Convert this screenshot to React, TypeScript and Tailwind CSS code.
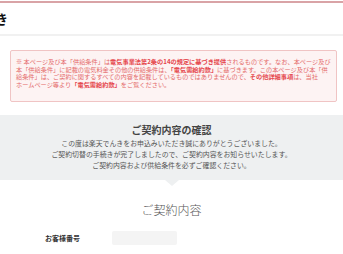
import React from 'react';

const noticeLines: { text: string; strong?: boolean }[][] = [
    [
        { text: '※ 本ページ及び本「供給条件」は' },
        { text: '電気事業法第2条の14の規定に基づき提供', strong: true },
        { text: 'されるものです。なお、本ページ及び' },
    ],
    [
        { text: '本「供給条件」に記載の電気料金その他の供給条件は、' },
        { text: '「電気需給約款」', strong: true },
        { text: 'に基づきます。この本ページ及び本「供' },
    ],
    [
        { text: '給条件」は、ご契約に関するすべての内容を記載しているものではありませんので、' },
        { text: 'その他詳細事項', strong: true },
        { text: 'は、当社' },
    ],
    [
        { text: 'ホームページ等より' },
        { text: '「電気需給約款」', strong: true },
        { text: 'をご覧ください。' },
    ],
];

const introLines = [
    'この度は楽天でんきをお申込みいただき誠にありがとうございました。',
    'ご契約切替の手続きが完了しましたので、ご契約内容をお知らせいたします。',
    'ご契約内容および供給条件を必ずご確認ください。',
];

export default function App() {
    return (
        <div className="w-[343px] h-[254px] overflow-hidden bg-white font-['Noto_Sans_CJK_JP',sans-serif]">
            {/* page heading, scrolled so only its tail shows */}
            <div className="mt-[1px] h-[2px] bg-[#d9a3a6]" />
            <div className="h-[33px] pt-[7px] border-b-2 border-[#f1f1f1] overflow-hidden">
                <span className="block ml-[-5px] text-[13px] leading-[18px] font-bold text-[#111]">き</span>
            </div>

            {/* supply terms notice */}
            <div className="mt-[14px] mx-[10px] w-[327px] h-[52px] rounded-[2px] border border-[#f0c4c4] bg-[#fdf3f3] pl-[5px] pt-[7px]">
                {noticeLines.map((line, i) => (
                    <p key={i} className="whitespace-nowrap text-[6.2px] leading-[7.6px] text-[#e46a6a]">
                        {line.map((part, j) => (
                            <span key={j} className={part.strong ? 'font-bold text-[#e5474d]' : ''}>{part.text}</span>
                        ))}
                    </p>
                ))}
            </div>

            {/* confirmation band */}
            <div className="mt-[13px] bg-[#eef0f1] pt-[8px] pb-[9px] text-center">
                <h2 className="text-[10px] leading-[13px] font-bold text-[#444]">ご契約内容の確認</h2>
                <div className="mt-[2px]">
                    {introLines.map(line => (
                        <p key={line} className="whitespace-nowrap text-[6.9px] leading-[11px] text-[#555]">{line}</p>
                    ))}
                </div>
            </div>
            <div className="flex justify-center">
                <svg width="14" height="6" viewBox="0 0 14 6">
                    <path d="M0 0 L14 0 L7 6 Z" fill="#eef0f1" />
                </svg>
            </div>

            {/* contract details */}
            <h3 className="mt-[16px] text-center text-[12px] leading-[16px] font-light text-[#555]">ご契約内容</h3>
            <div className="mt-[13px] flex items-center">
                <span className="ml-[45px] w-[67px] text-[7px] leading-[14px] font-bold text-[#333]">お客様番号</span>
                <div className="w-[65px] h-[14px] bg-[#f4f4f4] rounded-[2px]" />
            </div>
        </div>
    );
}
